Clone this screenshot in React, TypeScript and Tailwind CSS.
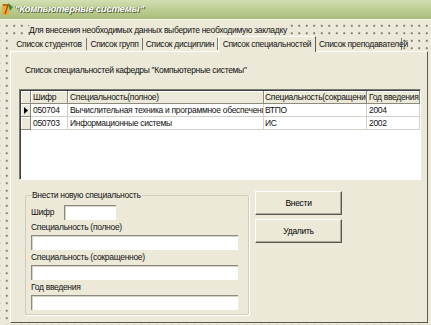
import React from 'react'

const tabs = [
  { label: 'Список студентов', w: 'w-[75px]' },
  { label: 'Список групп', w: 'w-[56px]' },
  { label: 'Список дисциплин', w: 'w-[75px]' },
  { label: 'Список специальностей', w: 'w-[98px]', active: true },
  { label: 'Список преподавателей', w: 'w-[86px] justify-start pl-[3px]' },
]

const rows = [
  { code: '050704', full: 'Вычислительная техника и программное обеспечение', short: 'ВТПО', year: '2004', current: true },
  { code: '050703', full: 'Информационные системы', short: 'ИС', year: '2002' },
]

function AppIcon() {
  return (
    <svg width="11" height="13" viewBox="0 0 11 13">
      <rect x="0" y="1" width="7" height="11" fill="#e8b030" />
      <path d="M1 2 L6 2 L3 11" stroke="#b05010" strokeWidth="1.5" fill="none" />
      <path d="M6 0 L11 4 L8 8" fill="#3a8a3a" />
    </svg>
  )
}

function Input({ w }: { w: string }) {
  return <div className={`${w} h-[15px] bg-white border-t border-l border-[#8a8a80] shadow-[inset_1px_1px_0_#d8d4c4]`} />
}

function Field({ label }: { label: string }) {
  return (
    <div className="mt-px">
      <p className="leading-[12px] whitespace-nowrap">{label}</p>
      <div className="mt-[2px]">
        <Input w="w-[207px]" />
      </div>
    </div>
  )
}

function Button({ label, top }: { label: string; top: string }) {
  return (
    <button className={`${top} block w-[87px] h-[24px] bg-[#ece9d8] border border-t-white border-l-white border-r-[#5a5a52] border-b-[#5a5a52] shadow-[inset_-1px_-1px_0_#aca899] text-black`}>
      {label}
    </button>
  )
}

const head = 'bg-[#ece9d8] border-r border-b border-[#8a8a80] shadow-[inset_1px_1px_0_#fff] leading-[12px] overflow-hidden whitespace-nowrap'
const cell = 'border-r border-b border-[#d4d0c8] leading-[12px] overflow-hidden whitespace-nowrap'

export default function App() {
  return (
    <div className="w-[431px] h-[325px] overflow-hidden bg-[#ece9d8] text-[8.5px] tracking-[-0.3px] text-[#111] font-['Liberation_Sans',Arial,sans-serif]">
      {/* title bar */}
      <div className="h-[19px] flex items-center gap-[2px] pl-[2px] bg-gradient-to-b from-[#d3dfb3] via-[#bccd92] to-[#a9bd7c]">
        <AppIcon />
        <span className="text-[9.5px] italic font-bold tracking-[-0.2px] text-white [text-shadow:1px_1px_0_#55663a,-1px_0_0_#6c7d4a]">
          "Компьютерные системы"
        </span>
      </div>
      <div className="h-px bg-[#f4f6ec]" />

      {/* form body with design grid */}
      <div className="h-[305px] bg-[radial-gradient(circle,#7a7a70_0.7px,transparent_1px)] bg-[length:7.5px_7.5px] bg-[position:3px_2px]">
        <div className="pt-[4px] pl-[29px] h-[16px]">
          <p className="w-fit bg-[#ece9d8] pr-[2px] leading-[12px] whitespace-nowrap">
            Для внесения необходимых данных выберите необходимую закладку
          </p>
        </div>

        <div className="ml-[10px] mt-px w-[418px]">
          {/* tab headers */}
          <div className="flex items-end pl-[2px] h-[14px]">
            {tabs.map(t =>
              t.active ? (
                <div
                  key={t.label}
                  className={`${t.w} h-[16px] -mb-px relative z-10 bg-[#ece9d8] border-t border-l border-white border-r border-r-[#5a5a52] rounded-t-[1px] flex items-center justify-center whitespace-nowrap`}
                >
                  {t.label}
                </div>
              ) : (
                <div
                  key={t.label}
                  className={`h-[12px] mb-px bg-[#ece9d8] border-r border-[#7a7a70] flex items-center justify-center whitespace-nowrap ${t.w}`}
                >
                  {t.label}
                </div>
              )
            )}
          </div>

          {/* tab page */}
          <div className="h-[272px] border-t border-l border-white border-r border-r-[#5a5a52] border-b border-b-[#5a5a52] bg-[#ece9d8]">
            <p className="pt-[12px] pl-[14px] leading-[12px] whitespace-nowrap">
              Список специальностей кафедры "Компьютерные системы"
            </p>

            {/* grid */}
            <div className="ml-[8px] mt-[13px] w-[402px] h-[91px] bg-white border-t border-l border-[#7a7a70] border-r border-r-white border-b border-b-white shadow-[inset_1px_1px_0_#404040]">
              <div className="flex h-[13px] mt-px ml-px">
                <div className={`w-[10px] ${head}`} />
                <div className={`w-[37px] pl-[2px] ${head}`}>Шифр</div>
                <div className={`w-[196px] pl-[2px] ${head}`}>Специальность(полное)</div>
                <div className={`w-[103px] pl-[1px] ${head}`}>Специальность(сокращение)</div>
                <div className={`w-[53px] pl-[2px] ${head} border-[#5a5a52]`}>Год введения</div>
              </div>
              {rows.map(r => (
                <div key={r.code} className="flex h-[13px] ml-px">
                  <div className="w-[10px] bg-[#ece9d8] border-r border-b border-[#8a8a80] shadow-[inset_1px_1px_0_#fff] flex items-center justify-center">
                    {r.current && (
                      <svg width="4" height="7" viewBox="0 0 4 7">
                        <path d="M0 0 L4 3.5 L0 7 Z" fill="#000" />
                      </svg>
                    )}
                  </div>
                  <div className={`w-[37px] pl-[2px] ${cell}`}>{r.code}</div>
                  <div className={`w-[196px] pl-[2px] ${cell}`}>{r.full}</div>
                  <div className={`w-[103px] pl-[1px] ${cell}`}>{r.short}</div>
                  <div className={`w-[53px] pl-[2px] ${cell}`}>{r.year}</div>
                </div>
              ))}
            </div>

            {/* form + buttons */}
            <div className="flex items-start mt-[11px]">
              <div className="ml-[14px] mt-[4px] w-[224px] h-[120px] border border-[#d0ccbc] rounded-[2px] shadow-[1px_1px_0_#fff] pl-[5px]">
                <p className="-mt-[7px] ml-px w-fit leading-[12px] bg-[#ece9d8] pr-px whitespace-nowrap">
                  Внести новую специальность
                </p>
                <div className="flex items-center gap-[10px] mt-[4px]">
                  <span>Шифр</span>
                  <Input w="w-[52px]" />
                </div>
                <Field label="Специальность (полное)" />
                <Field label="Специальность (сокращенное)" />
                <Field label="Год введения" />
              </div>
              <div className="ml-[6px]">
                <Button label="Внести" top="" />
                <Button label="Удалить" top="mt-[4px]" />
              </div>
            </div>
          </div>
        </div>
      </div>
    </div>
  )
}
